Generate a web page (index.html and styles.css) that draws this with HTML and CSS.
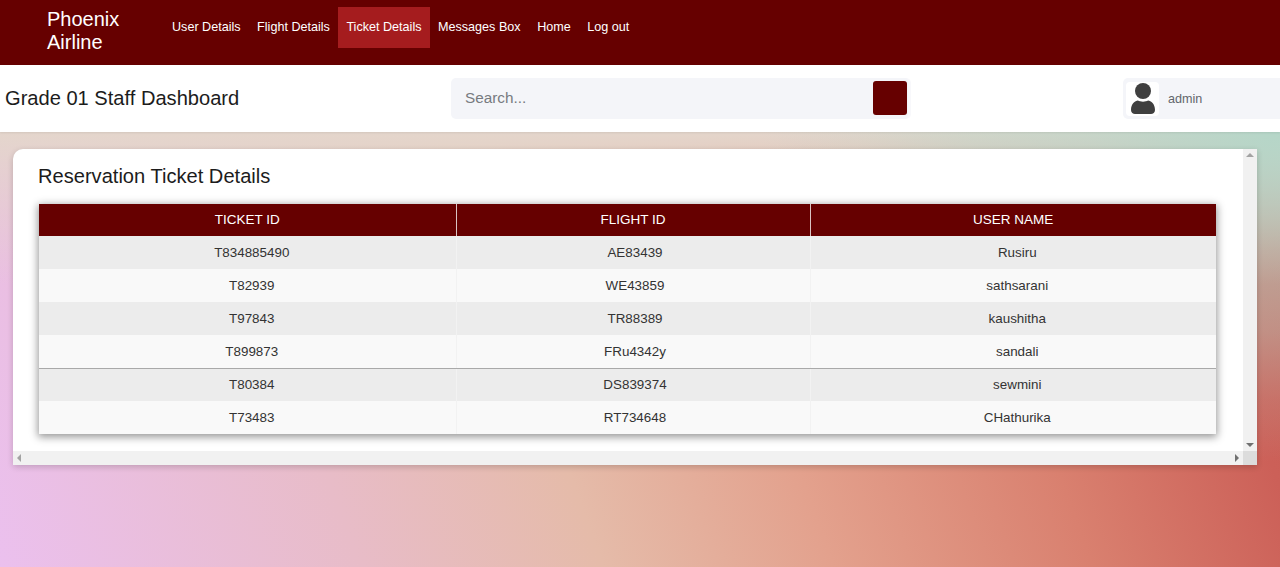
FILE: index.html
```html
<!DOCTYPE html>
<html lang="en">
<head>
<meta charset="utf-8">
<title>Phoenix Airline</title>
<link rel="stylesheet" href="styles.css">
</head>
<body>
<nav class="navbar">
  <a class="brand" href="#">Phoenix<br>Airline</a>
  <ul class="nav-links">
    <li><a href="#">User Details</a></li>
    <li><a href="#">Flight Details</a></li>
    <li><a class="active" href="#">Ticket Details</a></li>
    <li><a href="#">Messages Box</a></li>
    <li><a href="#">Home</a></li>
    <li><a href="#">Log out</a></li>
  </ul>
</nav>
<header class="subheader">
  <h1 class="dash-title">Grade 01 Staff Dashboard</h1>
  <form class="search">
    <span class="search-text">Search...</span>
    <button class="search-btn" type="button" aria-label="Search"></button>
  </form>
  <div class="user">
    <span class="avatar">
      <svg viewBox="0 0 24 31" width="24" height="31" aria-hidden="true">
        <circle cx="12" cy="8" r="8" fill="#3f3f3f"/>
        <path d="M0 27C0 21 4 17.500 7 17.500C9 19 15 19 17 17.500C20 17.500 24 21 24 27C24 29.500 22 31 20 31H4C2 31 0 29.500 0 27Z" fill="#3f3f3f"/>
      </svg>
    </span>
    <span class="user-name">admin</span>
  </div>
</header>
<main class="stage">
  <section class="card">
    <div class="card-body">
      <h2 class="card-title">Reservation Ticket Details</h2>
      <table class="tickets">
        <colgroup><col class="c1"><col class="c2"><col class="c3"></colgroup>
        <thead>
          <tr><th>TICKET ID</th><th>FLIGHT ID</th><th>USER NAME</th></tr>
        </thead>
        <tbody>
          <tr><td>T834885490</td><td>AE83439</td><td>Rusiru</td></tr>
          <tr><td>T82939</td><td>WE43859</td><td>sathsarani</td></tr>
          <tr><td>T97843</td><td>TR88389</td><td>kaushitha</td></tr>
          <tr class="rule"><td>T899873</td><td>FRu4342y</td><td>sandali</td></tr>
          <tr><td>T80384</td><td>DS839374</td><td>sewmini</td></tr>
          <tr><td>T73483</td><td>RT734648</td><td>CHathurika</td></tr>
        </tbody>
      </table>
    </div>
    <div class="vbar"><i class="arrow up"></i><i class="arrow down"></i></div>
    <div class="hbar"><i class="arrow left"></i><i class="arrow right"></i></div>
    <div class="corner"></div>
  </section>
</main>
</body>
</html>
```
FILE: styles.css
```css
* { box-sizing: border-box; }
html, body { height: 100%; }
body {
  margin: 0;
  height: 567px;
  overflow: hidden;
  display: flex;
  flex-direction: column;
  font-family: "Liberation Sans", Arial, sans-serif;
  color: #222;
}
.navbar {
  height: 65px;
  flex: none;
  background: #660000;
  display: flex;
  align-items: flex-start;
  padding-left: 47px;
}
.brand {
  width: 116.75px;
  margin-top: 8px;
  color: #fff;
  font-size: 20px;
  line-height: 23px;
  text-decoration: none;
}
.nav-links {
  display: flex;
  list-style: none;
  margin: 7px 0 0;
  padding: 0;
}
.nav-links a {
  display: block;
  padding: 0 8.25px;
  height: 41px;
  line-height: 40px;
  font-size: 12.6px;
  color: #fff;
  text-decoration: none;
  white-space: nowrap;
}
.nav-links a.active { background: #a51c1e; }
.subheader {
  height: 67px;
  flex: none;
  background: #fff;
  display: flex;
  align-items: center;
  padding-left: 5px;
  box-shadow: 0 1px 2px rgba(0,0,0,.08);
  position: relative;
}
.dash-title {
  width: 446px;
  margin: 0;
  font-size: 20.1px;
  font-weight: 400;
  color: #1c1c1c;
  white-space: nowrap;
}
.search {
  width: 460px;
  height: 41px;
  margin: 0;
  background: #f4f5f9;
  border-radius: 5px;
  display: flex;
  align-items: center;
  justify-content: space-between;
  padding: 0 1px 2px 14px;
  border-right: 3px solid #f8f8fb;
}
.search-text { font-size: 15.3px; color: #777b80; }
.search-btn {
  width: 34px;
  height: 34px;
  border: 0;
  padding: 0;
  border-radius: 3px;
  background: #660000;
}
.user {
  width: 157px;
  height: 41px;
  margin-left: 212px;
  background: #f4f5f9;
  border-radius: 5px 0 0 5px;
  display: flex;
  align-items: center;
  padding-left: 3px;
}
.avatar {
  width: 33px;
  height: 34px;
  background: #fff;
  border-radius: 4px;
  display: flex;
  align-items: center;
  justify-content: center;
}
.user-name { margin-left: 9px; font-size: 12.6px; color: #62656b; }
.stage {
  flex: 1;
  padding: 17px 23px 0 13px;
  background:
    radial-gradient(ellipse 520px 330px at 1280px 0, rgba(181,214,200,1), rgba(181,214,200,.6) 36%, rgba(181,214,200,.42) 60%, rgba(181,214,200,.16) 81%, rgba(181,214,200,0) 100%),
    linear-gradient(to bottom, rgba(228,214,204,1) 0, rgba(228,214,204,.75) 8%, rgba(228,214,204,0) 35%),
    linear-gradient(70deg, #ebc0ee 0%, #e8bcc8 25%, #e5bba9 42%, #e3a18d 58%, #d9806f 76%, #cc6058 91%, #c85a50 100%);
}
.card {
  height: 316px;
  display: grid;
  grid-template-columns: 1fr 14px;
  grid-template-rows: 1fr 14px;
  background: #fff;
  border-radius: 10px 0 0 3px;
  box-shadow: 0 2px 6px rgba(0,0,0,.18);
}
.card-body { padding: 16px 26px 0 25px; min-width: 0; }
.card-title {
  margin: 0 0 16px;
  font-size: 20.1px;
  line-height: 23px;
  font-weight: 400;
  color: #1c1c1c;
}
.tickets {
  width: 1177px;
  margin-left: 1px;
  table-layout: fixed;
  border-collapse: collapse;
  font-size: 13.4px;
  box-shadow: 0 2px 8px 1px rgba(0,0,0,.42);
}
.c1 { width: 417px; }
.c2 { width: 354px; }
.c3 { width: 406px; }
.tickets th, .tickets td {
  height: 33px;
  padding: 0;
  text-align: center;
  font-weight: 400;
}
.tickets th {
  height: 32px;
  padding-bottom: 2px;
  font-size: 13.5px;
  background: #660000;
  color: #fff;
  border-left: 1px solid #d9c2c2;
}
.tickets th:first-child, .tickets td:first-child { border-left: 0; }
.tickets td { color: #333; border-left: 1px solid #f2f2f2; padding-left: 4px; }
.tickets td:first-child { padding-left: 9px; }
.tickets td:last-child { padding-left: 8px; }
.tickets tbody tr:nth-child(odd) td { background: #ececec; border-left-color: #f2f2f2; }
.tickets tbody tr:nth-child(even) td { background: #f9f9f9; }
.tickets tbody tr.rule td { border-bottom: 1px solid #a9a9a9; }
.vbar, .hbar, .corner { background: #f1f1f1; position: relative; }
.corner { background: #dcdcdc; }
.arrow { position: absolute; width: 0; height: 0; border: 4px solid transparent; }
.up { left: 3px; top: 0; border-bottom-color: #a3a3a3; }
.down { left: 3px; bottom: 0; border-top-color: #707070; }
.left { left: 0; top: 3px; border-right-color: #a3a3a3; }
.right { right: 0; top: 3px; border-left-color: #707070; }
```
